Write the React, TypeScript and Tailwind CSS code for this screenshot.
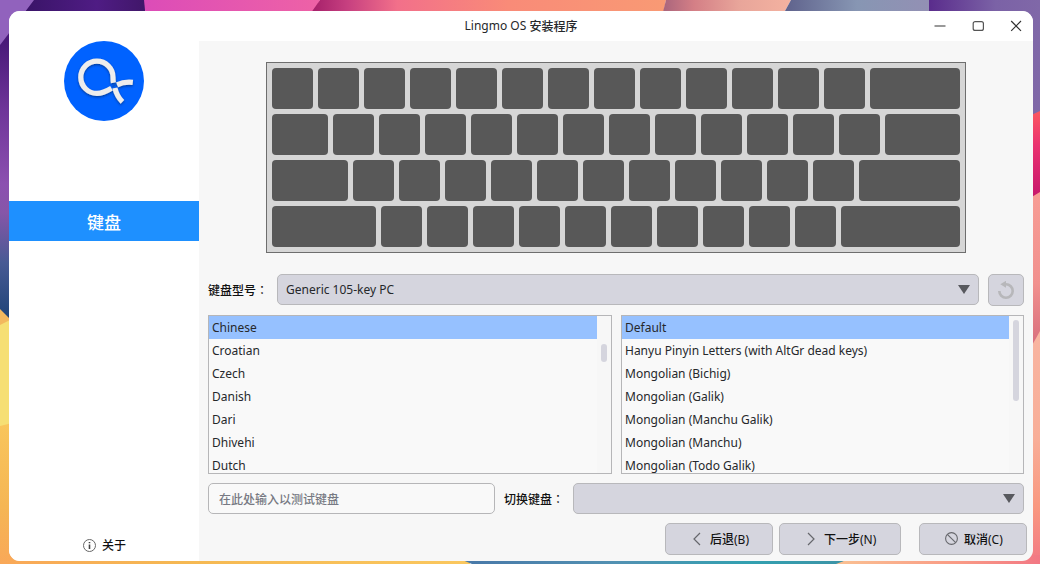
import type { ReactNode } from "react";

const layouts = ["Chinese", "Croatian", "Czech", "Danish", "Dari", "Dhivehi", "Dutch"];
const variants = [
  "Default",
  "Hanyu Pinyin Letters (with AltGr dead keys)",
  "Mongolian (Bichig)",
  "Mongolian (Galik)",
  "Mongolian (Manchu Galik)",
  "Mongolian (Manchu)",
  "Mongolian (Todo Galik)",
];

const keyRows = [
  { first: "w-[41px]", count: 12 },
  { first: "w-[56px]", count: 12 },
  { first: "w-[76px]", count: 11 },
  { first: "w-[104px]", count: 10 },
];

function Wallpaper() {
  return (
    <svg className="absolute inset-0" width="1040" height="564" viewBox="0 0 1040 564">
      <defs>
        <linearGradient id="pink" gradientUnits="userSpaceOnUse" x1="144" y1="0" x2="320" y2="0">
          <stop offset="0" stopColor="#dc4cb8" />
          <stop offset="1" stopColor="#ee62a6" />
        </linearGradient>
        <linearGradient id="coral" gradientUnits="userSpaceOnUse" x1="312" y1="0" x2="668" y2="0">
          <stop offset="0" stopColor="#a5206a" />
          <stop offset=".1" stopColor="#c74080" />
          <stop offset=".24" stopColor="#f2708a" />
          <stop offset=".55" stopColor="#f98b78" />
          <stop offset="1" stopColor="#f99a74" />
        </linearGradient>
        <linearGradient id="peach" gradientUnits="userSpaceOnUse" x1="662" y1="0" x2="790" y2="0">
          <stop offset="0" stopColor="#a8647c" />
          <stop offset=".25" stopColor="#d47f86" />
          <stop offset=".6" stopColor="#e8a59a" />
          <stop offset="1" stopColor="#f4b2a0" />
        </linearGradient>
        <linearGradient id="slate" gradientUnits="userSpaceOnUse" x1="785" y1="0" x2="929" y2="0">
          <stop offset="0" stopColor="#5f628c" />
          <stop offset=".5" stopColor="#8796b3" />
          <stop offset="1" stopColor="#9390b4" />
        </linearGradient>
        <linearGradient id="violet" gradientUnits="userSpaceOnUse" x1="929" y1="0" x2="1040" y2="0">
          <stop offset="0" stopColor="#5a2c8c" />
          <stop offset=".6" stopColor="#7b62a6" />
          <stop offset="1" stopColor="#8068a8" />
        </linearGradient>
        <linearGradient id="indigo" gradientUnits="userSpaceOnUse" x1="26" y1="0" x2="144" y2="0">
          <stop offset="0" stopColor="#3a1468" />
          <stop offset=".6" stopColor="#4f1c84" />
          <stop offset="1" stopColor="#41176a" />
        </linearGradient>
        <linearGradient id="left" gradientUnits="userSpaceOnUse" x1="0" y1="40" x2="0" y2="318">
          <stop offset="0" stopColor="#481878" />
          <stop offset=".25" stopColor="#6e3599" />
          <stop offset=".52" stopColor="#8c50b0" />
          <stop offset=".62" stopColor="#8656a8" />
          <stop offset=".8" stopColor="#485a94" />
          <stop offset="1" stopColor="#204478" />
        </linearGradient>
        <linearGradient id="gold" gradientUnits="userSpaceOnUse" x1="0" y1="420" x2="0" y2="564">
          <stop offset="0" stopColor="#f9c65c" />
          <stop offset=".6" stopColor="#f5b654" />
          <stop offset="1" stopColor="#f9a858" />
        </linearGradient>
        <linearGradient id="goldBottom" gradientUnits="userSpaceOnUse" x1="0" y1="0" x2="465" y2="0">
          <stop offset="0" stopColor="#f9a858" />
          <stop offset=".4" stopColor="#f5b852" />
          <stop offset="1" stopColor="#fac75e" />
        </linearGradient>
        <linearGradient id="blueBottom" gradientUnits="userSpaceOnUse" x1="463" y1="0" x2="845" y2="0">
          <stop offset="0" stopColor="#4878a8" />
          <stop offset=".4" stopColor="#5291b2" />
          <stop offset=".75" stopColor="#32a0b0" />
          <stop offset="1" stopColor="#3c93a6" />
        </linearGradient>
        <linearGradient id="peachBottom" gradientUnits="userSpaceOnUse" x1="838" y1="0" x2="1040" y2="0">
          <stop offset="0" stopColor="#fac092" />
          <stop offset=".6" stopColor="#f99a85" />
          <stop offset="1" stopColor="#f27884" />
        </linearGradient>
        <linearGradient id="rose" gradientUnits="userSpaceOnUse" x1="0" y1="112" x2="0" y2="195">
          <stop offset="0" stopColor="#fb5660" />
          <stop offset=".4" stopColor="#ea3270" />
          <stop offset="1" stopColor="#c8186c" />
        </linearGradient>
        <linearGradient id="salmon" gradientUnits="userSpaceOnUse" x1="0" y1="195" x2="0" y2="342">
          <stop offset="0" stopColor="#f79c94" />
          <stop offset=".6" stopColor="#f1908e" />
          <stop offset="1" stopColor="#d9707e" />
        </linearGradient>
        <linearGradient id="blush" gradientUnits="userSpaceOnUse" x1="0" y1="335" x2="0" y2="564">
          <stop offset="0" stopColor="#f8b4a0" />
          <stop offset=".45" stopColor="#f8ae98" />
          <stop offset=".75" stopColor="#f99880" />
          <stop offset="1" stopColor="#f27884" />
        </linearGradient>
      </defs>
      <rect width="34" height="564" fill="#9162bd" />
      <path d="M34 0H145V30H9V33L0 45Z" fill="url(#indigo)" />
      <path d="M0 45L20 19V330H0Z" fill="url(#left)" />
      <path d="M0 309L10 319V564H0Z" fill="#f3b85e" />
      <path d="M0 325L20 315V430H0Z" fill="#f6df74" />
      <path d="M0 426L20 421V564H0Z" fill="url(#gold)" />
      <path d="M144 0H320L310 20H146Z" fill="url(#pink)" />
      <path d="M320 0H666L662 20H306Z" fill="url(#coral)" />
      <path d="M666 0H791L780 20H661Z" fill="url(#peach)" />
      <path d="M791 0H929V20H780Z" fill="url(#slate)" />
      <path d="M929 0H1040V120H1025V20H929Z" fill="url(#violet)" />
      <path d="M1025 118L1040 111V200H1025Z" fill="url(#rose)" />
      <path d="M1025 201L1040 192V350H1025Z" fill="url(#salmon)" />
      <path d="M1025 358L1040 331V564H1025Z" fill="url(#blush)" />
      <path d="M9 555H470V564H9Z" fill="url(#goldBottom)" />
      <path d="M450 555L472 564H838L860 555Z" fill="url(#blueBottom)" />
      <path d="M860 555H1040V564H836Z" fill="url(#peachBottom)" />
    </svg>
  );
}

function Logo() {
  return (
    <svg width="80" height="80" viewBox="64 41 80 80" className="mx-auto shrink-0">
      <defs>
        <filter id="soft" x="-20%" y="-20%" width="140%" height="150%">
          <feDropShadow dx="0" dy="1.2" stdDeviation="1.1" floodColor="#00205c" floodOpacity=".65" />
        </filter>
      </defs>
      <circle cx="104" cy="81" r="40" fill="#0062ff" />
      <g filter="url(#soft)" fill="none" stroke="#ededed" strokeWidth="5.2">
        <path d="M111.500 88.200C105.500 91.800 101.500 93.400 97 93.400A16.100 16.100 0 1 1 113 77.300C113 79.500 113.100 81.200 113.400 82.800" />
        <path d="M132.800 82.400C126.500 81.700 121.500 82.700 117 84.900" />
        <path d="M114.900 88C116.200 93.500 118.500 98 122.400 101.800" />
      </g>
      <path d="M112 86.300L116.300 82.500L116.300 84.500L112.600 88.300Z" fill="#0a55c8" />
    </svg>
  );
}

function Keyboard() {
  return (
    <div className="mx-auto flex h-[191px] w-[700px] shrink-0 flex-col gap-[5px] border border-[#6e6e6e] bg-[#d6d6d6] p-[5px]">
      {keyRows.map((row) => (
        <div key={row.first} className="flex h-[41px] gap-[5px]">
          <div className={`${row.first} shrink-0 rounded bg-[#585858]`} />
          {Array.from({ length: row.count }, (_, i) => (
            <div key={i} className="w-[41px] shrink-0 rounded bg-[#585858]" />
          ))}
          <div className="grow rounded bg-[#585858]" />
        </div>
      ))}
    </div>
  );
}

function Combo({ children, className }: { children?: ReactNode; className: string }) {
  return (
    <button
      className={`${className} flex h-[31px] items-center justify-between rounded-[5px] border border-[#b8b8bb] bg-[#d5d5de] pr-2 pl-2 text-left`}
    >
      <span>{children}</span>
      <svg width="12" height="9" viewBox="0 0 12 9" className="-mt-px">
        <path d="M0 0H12L6 9Z" fill="#58595e" />
      </svg>
    </button>
  );
}

function FieldLabel({ children }: { children: string }) {
  return (
    <span className="h-[31px] w-[69px] pt-px leading-[30px] font-medium text-[#111]">
      {children}
      <span className="font-['Noto_Sans_CJK_TC',sans-serif] font-normal" lang="zh-TW">
        ：
      </span>
    </span>
  );
}

function List({ items, className, thumb }: { items: string[]; className: string; thumb: string }) {
  return (
    <div className={`${className} flex h-[159px] overflow-hidden border border-[#b6b6b8] bg-[#f9f9f9]`}>
      <ul className="grow">
        {items.map((item, i) => (
          <li key={item} className={`h-[23px] pl-[3px] leading-[23px] ${i === 0 ? "bg-[#96c1ff]" : ""}`}>
            {item}
          </li>
        ))}
      </ul>
      <div className="w-3.5 shrink-0 bg-[#f7f7f7] pl-1">
        <div className={`${thumb} w-1.5 rounded-full bg-[#d5d5de]`} />
      </div>
    </div>
  );
}

function ActionButton({
  icon,
  label,
  shortcut,
  className,
}: {
  icon: ReactNode;
  label: string;
  shortcut: string;
  className: string;
}) {
  return (
    <button
      className={`${className} flex h-8 items-center rounded-[5px] border border-[#b8b8bb] bg-[#d5d5de]`}
    >
      {icon}
      <span className="pt-px">
        <span className="font-medium">{label}</span>
        {shortcut}
      </span>
    </button>
  );
}

export default function App() {
  return (
    <div className="relative h-[564px] w-[1040px] overflow-hidden font-['Noto_Sans','Noto_Sans_CJK_SC',sans-serif] text-[12px] text-[#26282b]">
      <Wallpaper />
      <div className="relative pt-[11px] pl-[9px]">
        <div className="flex h-[550px] w-[1024px] flex-col overflow-hidden rounded-[11px] bg-[#f7f7f7]">
          <header className="grid h-[30px] shrink-0 grid-cols-[1fr_auto_1fr] items-center bg-white">
            <span />
            <h1 className="h-[30px] leading-[30px]">
              Lingmo OS <span className="align-[-1px] leading-none font-medium">安装程序</span>
            </h1>
            <svg width="90" height="14" viewBox="0 0 90 14" fill="none" className="mr-[10px] justify-self-end">
              <path d="M1.500 7H12.500" stroke="#777" strokeWidth="1.600" />
              <rect x="40.200" y="2.600" width="10.200" height="8.800" rx="2" stroke="#555" strokeWidth="1.200" />
              <path d="M78.200 2L88 11.800M88 2L78.200 11.800" stroke="#333" strokeWidth="1.200" />
            </svg>
          </header>
          <div className="flex grow">
            <aside className="flex w-[190px] shrink-0 flex-col bg-white">
              <Logo />
              <div className="mt-20 flex h-10 items-center justify-center bg-[#1e90ff] pt-1 text-[17px] font-medium text-white">
                键盘
              </div>
              <div className="mt-auto mb-[6px] flex h-5 items-center gap-[6px] pl-[74px] text-[#111]">
                <svg width="13" height="13" viewBox="0 0 13 13" fill="none">
                  <circle cx="6.500" cy="6.500" r="6" stroke="#666" />
                  <path d="M6.500 5.500V10M6.500 3V4.300" stroke="#444" strokeWidth="1.600" />
                </svg>
                <span className="pt-px font-medium">关于</span>
              </div>
            </aside>
            <main className="flex grow flex-col pt-[21px] pl-[9px]">
              <div className="mr-[9px] flex">
                <Keyboard />
              </div>
              <div className="mt-[21px] flex items-start">
                <FieldLabel>键盘型号</FieldLabel>
                <Combo className="w-[702px]">Generic 105-key PC</Combo>
                <button className="ml-[9px] flex h-8 w-9 items-center justify-center rounded-[5px] border border-[#b8b8bb] bg-[#d5d5de]">
                  <svg width="18" height="18" viewBox="0 0 18 18" fill="none">
                    <path d="M2.300 10A6.700 6.700 0 1 0 9 3.300H7" stroke="#b7b7ba" strokeWidth="2.600" />
                    <path d="M3.300 3.300L9 -.2V6.800Z" fill="#b7b7ba" />
                  </svg>
                </button>
              </div>
              <div className="mt-[9px] flex gap-[9px]">
                <List items={layouts} className="w-[404px]" thumb="mt-7 h-[18px]" />
                <List items={variants} className="w-[403px]" thumb="mt-1 h-[81px]" />
              </div>
              <div className="mt-[9px] flex h-[31px] items-start">
                <input
                  placeholder="在此处输入以测试键盘"
                  className="mr-[9px] h-[31px] w-[287px] rounded-[5px] border border-[#b6b6b8] bg-[#f9f9f9] px-2.5 pt-px font-medium placeholder:text-[#777983]"
                />
                <FieldLabel>切换键盘</FieldLabel>
                <Combo className="w-[451px]" />
              </div>
              <div className="mt-[9px] mr-[6px] flex justify-end text-[#111]">
                <ActionButton
                  className="w-[108px] gap-[9px] pl-[27px]"
                  label="后退"
                  shortcut="(B)"
                  icon={
                    <svg width="8" height="14" viewBox="0 0 8 14" fill="none" className="-mt-px">
                      <path d="M7 1L1 7L7 13" stroke="#66676c" strokeWidth="1.200" />
                    </svg>
                  }
                />
                <ActionButton
                  className="ml-1.5 w-[122px] gap-[9px] pl-[27px]"
                  label="下一步"
                  shortcut="(N)"
                  icon={
                    <svg width="8" height="14" viewBox="0 0 8 14" fill="none" className="-mt-px">
                      <path d="M1 1L7 7L1 13" stroke="#66676c" strokeWidth="1.200" />
                    </svg>
                  }
                />
                <ActionButton
                  className="ml-[18px] w-[108px] gap-[6px] pl-[25px]"
                  label="取消"
                  shortcut="(C)"
                  icon={
                    <svg width="13" height="13" viewBox="0 0 13 13" fill="none" className="-mt-px">
                      <circle cx="6.500" cy="6.500" r="5.900" stroke="#66676c" strokeWidth="1.100" />
                      <path d="M2.300 2.300L10.700 10.700" stroke="#66676c" strokeWidth="1.100" />
                    </svg>
                  }
                />
              </div>
            </main>
          </div>
        </div>
      </div>
    </div>
  );
}
